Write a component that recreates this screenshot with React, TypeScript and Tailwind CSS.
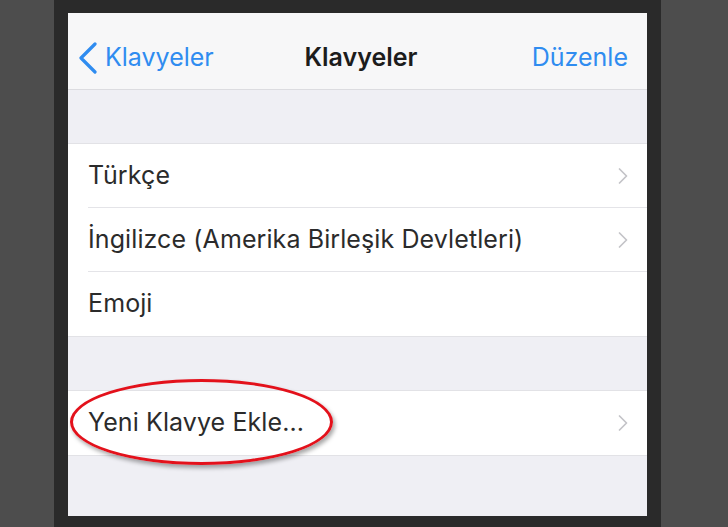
import { ChevronRight } from "lucide-react";

const Row = ({ label, chevron = true, last = false }: { label: string; chevron?: boolean; last?: boolean }) => (
  <div className="bg-white pl-[20px]">
    <div
      className={
        "flex h-[64px] items-center justify-between pr-[10px] " +
        (last ? "" : "border-b border-[#e4e4e8]")
      }
    >
      <span className="text-[25px] tracking-[0.1px] text-[#2b2b2b]">{label}</span>
      {chevron && <ChevronRight className="h-[28px] w-[28px] text-[#c4c4c8]" strokeWidth={1.5} />}
    </div>
  </div>
);

export default function App() {
  return (
    <div className="flex h-[527px] w-[728px] bg-[#4d4d4d] font-['Inter',sans-serif]">
      <div className="ml-[54px] w-[607px] bg-[#2a2a2a] px-[14px] pt-[13px] pb-[11px]">
        <div className="relative flex h-full flex-col bg-[#efeff4]">
          <div className="flex h-[77px] items-center justify-between border-b border-[#dcdce0] bg-[#f7f7f8] pt-[13px] pl-[10px] pr-[19px]">
            <div className="flex w-[190px] items-center text-[#2f8cf0]">
              <svg width="20" height="32" viewBox="0 0 20 32" fill="none" stroke="currentColor" strokeWidth="3.2" strokeLinecap="round" strokeLinejoin="round">
                <polyline points="17,2 3,16 17,30" />
              </svg>
              <span className="ml-[7px] text-[25px]">Klavyeler</span>
            </div>
            <span className="ml-[4px] text-[25px] font-semibold text-[#1c1c1c]">Klavyeler</span>
            <span className="w-[178px] text-right text-[25px] text-[#2f8cf0]">Düzenle</span>
          </div>
          <div className="h-[53px]" />
          <div className="border-y border-[#e2e2e6]">
            <Row label="Türkçe" />
            <Row label="İngilizce (Amerika Birleşik Devletleri)" />
            <Row label="Emoji" chevron={false} last />
          </div>
          <div className="h-[53px]" />
          <div className="border-y border-[#e2e2e6]">
            <Row label="Yeni Klavye Ekle..." last />
          </div>
          <div className="pointer-events-none absolute left-[2px] top-[366px] h-[86px] w-[263px] rounded-[50%] border-[3.5px] border-[#e3111b] shadow-[2px_3px_4px_rgba(0,0,0,0.35)]" />
        </div>
      </div>
    </div>
  );
}
